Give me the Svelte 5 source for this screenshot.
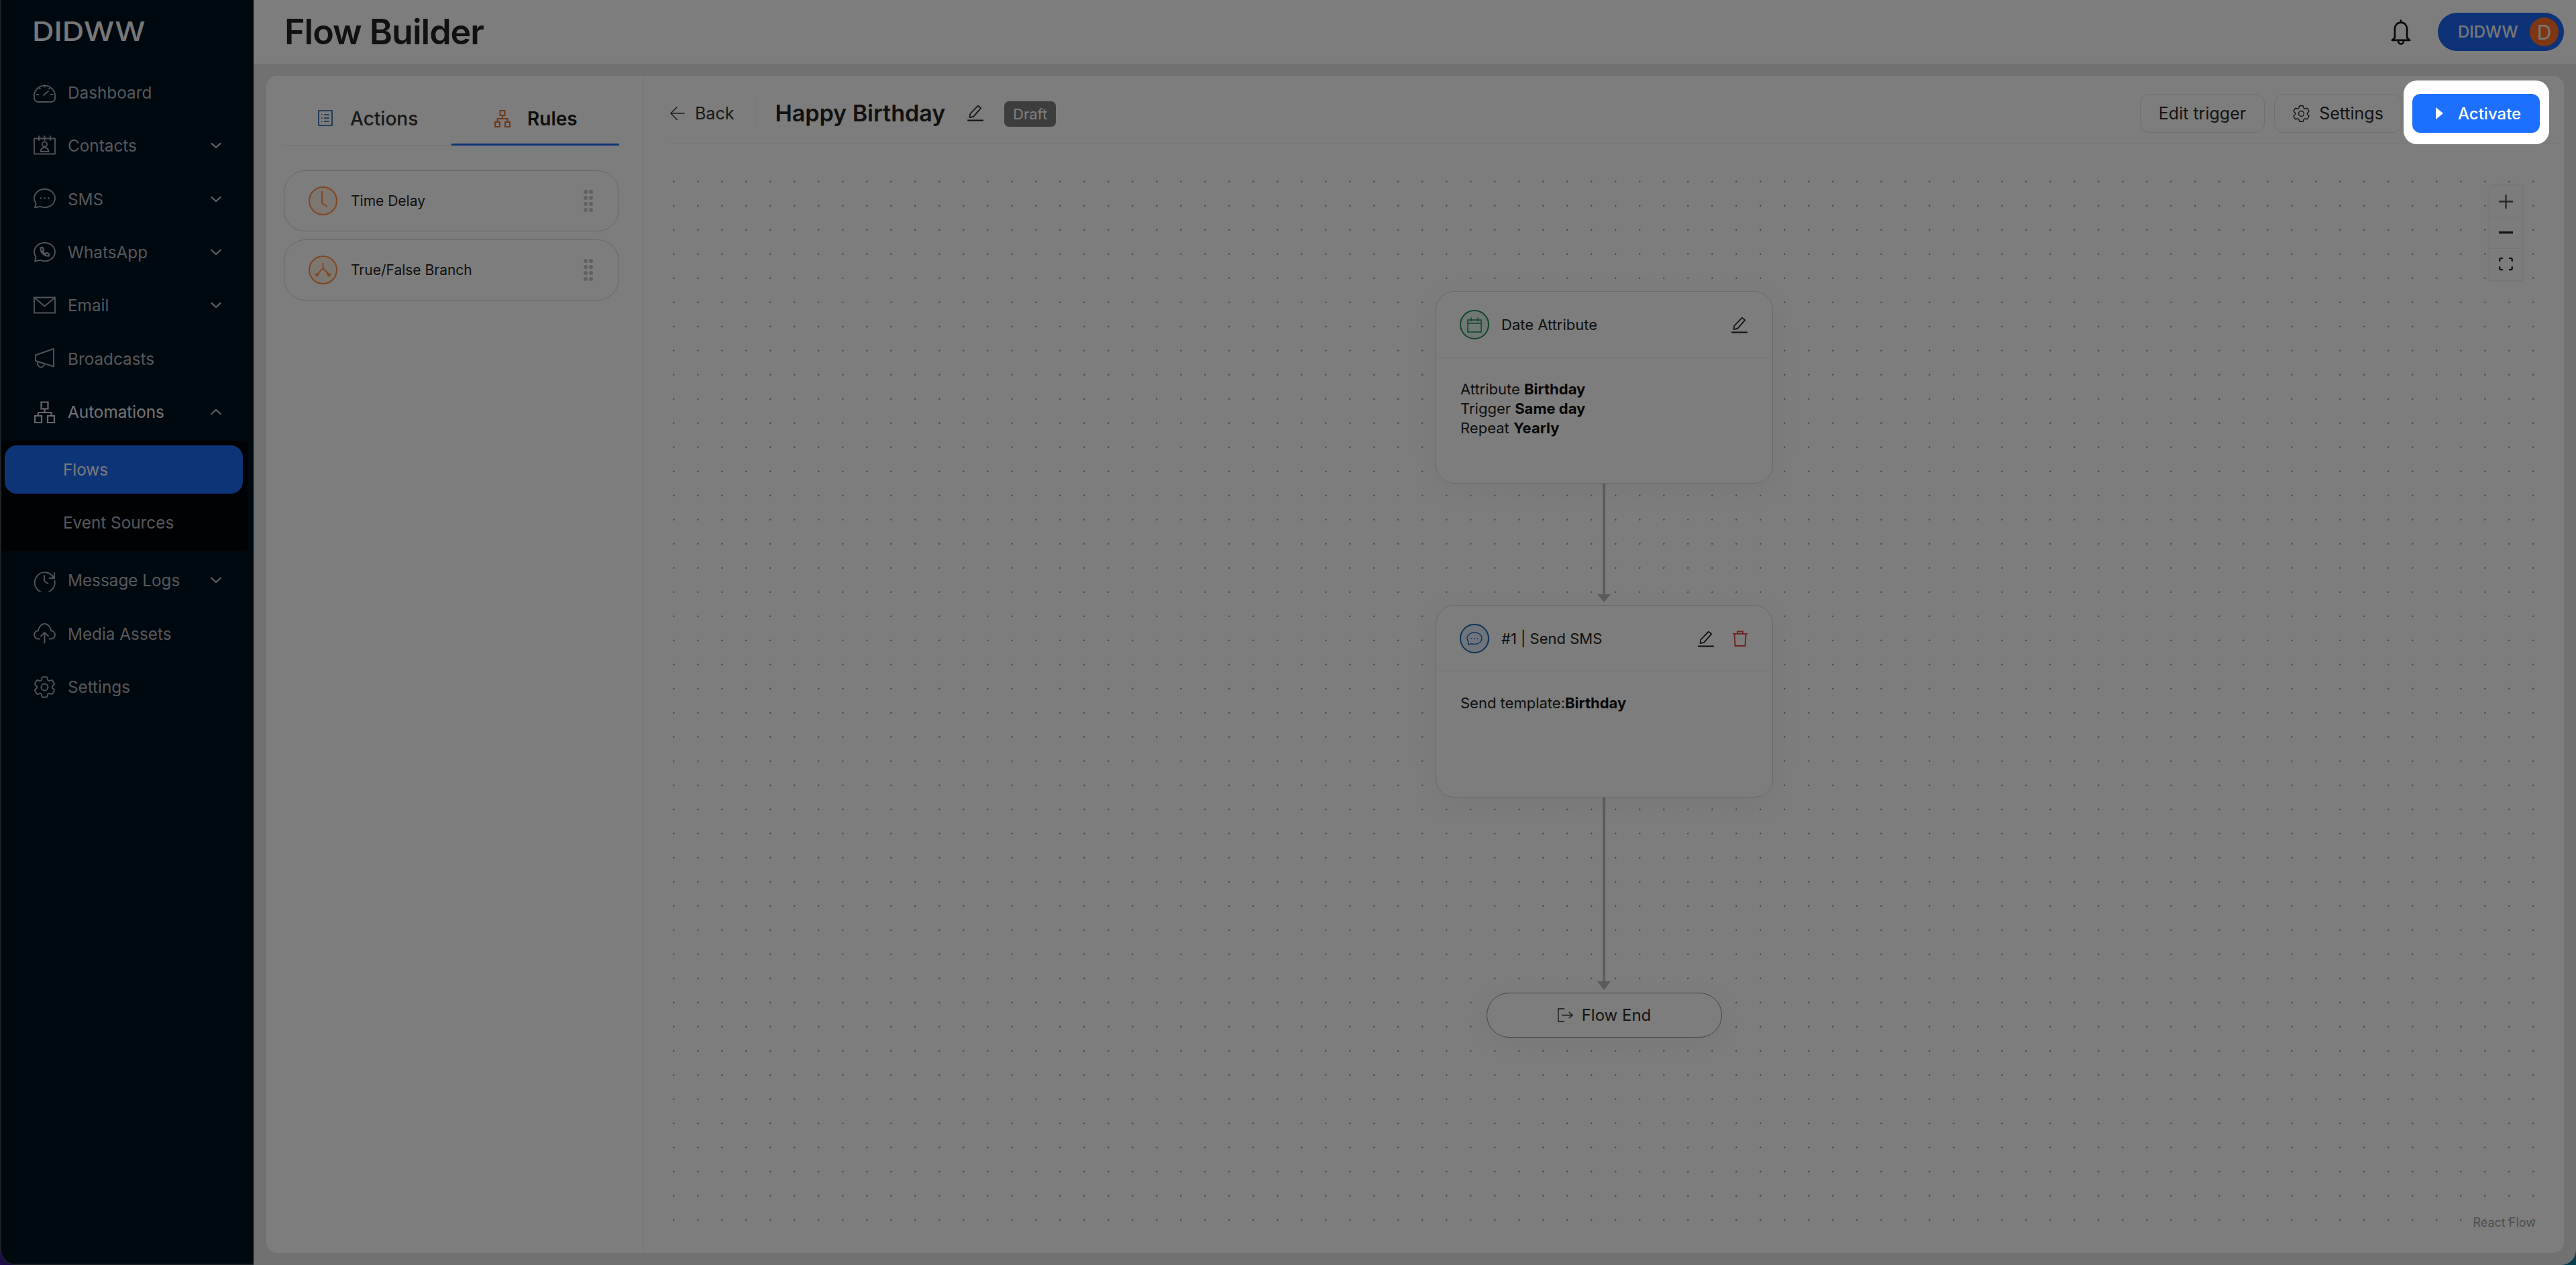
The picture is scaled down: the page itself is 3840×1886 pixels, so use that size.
<script>
  const upper = [
    { id: 'dash', label: 'Dashboard' },
    { id: 'contacts', label: 'Contacts', chev: true },
    { id: 'sms', label: 'SMS', chev: true },
    { id: 'wa', label: 'WhatsApp', chev: true },
    { id: 'mail', label: 'Email', chev: true },
    { id: 'cast', label: 'Broadcasts' }
  ];
  const lower = [
    { id: 'logs', label: 'Message Logs', chev: true },
    { id: 'media', label: 'Media Assets' },
    { id: 'gear', label: 'Settings' }
  ];
</script>

{#snippet gearPath()}
  <circle cx="12" cy="12" r="3" />
  <path d="M9.594 3.94c.09-.542.56-.94 1.110-.94h2.593c.55 0 1.020.398 1.110.94l.213 1.281c.063.374.313.686.645.870.074.040.147.083.220.127.324.196.72.257 1.075.124l1.217-.456a1.125 1.125 0 011.370.490l1.296 2.247a1.125 1.125 0 01-.26 1.431l-1.003.827c-.293.240-.438.613-.431.992a6.759 6.759 0 010 .255c-.007.378.138.75.430.990l1.005.828c.424.35.534.954.260 1.430l-1.298 2.247a1.125 1.125 0 01-1.369.491l-1.217-.456c-.355-.133-.75-.072-1.076.124a6.570 6.570 0 01-.220.128c-.331.183-.581.495-.644.869l-.213 1.280c-.09.543-.56.941-1.110.941h-2.594c-.55 0-1.020-.398-1.110-.94l-.213-1.281c-.062-.374-.312-.686-.644-.870a6.520 6.520 0 01-.220-.127c-.325-.196-.72-.257-1.076-.124l-1.217.456a1.125 1.125 0 01-1.369-.490l-1.297-2.247a1.125 1.125 0 01.260-1.431l1.004-.827c.292-.240.437-.613.430-.992a6.932 6.932 0 010-.255c.007-.378-.138-.75-.430-.990l-1.004-.828a1.125 1.125 0 01-.260-1.430l1.297-2.247a1.125 1.125 0 011.370-.491l1.216.456c.356.133.751.072 1.076-.124.072-.044.146-.087.220-.128.332-.183.582-.495.644-.869l.214-1.281z" stroke-linejoin="round" />
{/snippet}

{#snippet pencil()}
  <svg class="pencil" viewBox="0 0 24 24" fill="none" stroke="currentColor" stroke-width="1.600">
    <path d="M15.6 2.4l4 3.2L9.4 17.4l-5.2 1.2.6-5z" stroke-linejoin="round" />
    <path d="M1 22.6h22" stroke-width="1.9" />
  </svg>
{/snippet}

{#snippet grip()}
  <div class="grip">
    {#each Array(8) as _}<i></i>{/each}
  </div>
{/snippet}

{#snippet chevron(up)}
  <svg class="chev" viewBox="0 0 16 10" fill="none" stroke="currentColor" stroke-width="2.2" stroke-linecap="round" stroke-linejoin="round">
    {#if up}<path d="M1.5 8L8 2l6.5 6" />{:else}<path d="M1.5 2L8 8l6.5-6" />{/if}
  </svg>
{/snippet}

{#snippet navIcon(id)}
  <svg class="nav-icon" viewBox="0 0 33 33" fill="none" stroke="currentColor" stroke-width="1.9" stroke-linecap="round" stroke-linejoin="round">
    {#if id === 'dash'}
      <path d="M7 30h19a6 6 0 0 0 6-7 15.6 15.6 0 1 0-31 0 6 6 0 0 0 6 7z" />
      <path d="M16.5 5.5v2M8.5 9l1.4 1.4M24.5 9l-1.4 1.4M4.8 19h2.4M26 19h2.4M15 20l7-6" />
    {:else if id === 'contacts'}
      <path d="M1 5.5h31v23H1z" />
      <path d="M8 2v6M16.5 2v6M25 2v6" />
      <circle cx="16.5" cy="14" r="3.6" />
      <path d="M10.5 25c.5-4 3-6 6-6s5.500 2 6 6z" />
    {:else if id === 'sms'}
      <path d="M16.500 2C7.800 2 1 8 1 15.500c0 3 1 5.600 2.700 7.800L2 29.500l8-1.600c2 .8 4.200 1.300 6.500 1.300 8.700 0 15.500-6 15.500-13.700S25.200 2 16.500 2z" />
      <path d="M10.500 15.500h.3M16.400 15.500h.3M22.300 15.500h.3" stroke-width="2.400" />
    {:else if id === 'wa'}
      <path d="M16.500 2C7.800 2 1 8 1 15.500c0 3 1 5.600 2.700 7.800L2 29.500l8-1.600c2 .8 4.200 1.300 6.500 1.300 8.700 0 15.500-6 15.500-13.700S25.200 2 16.500 2z" />
      <path d="M10.500 9.500l3-.7 1.800 3.700-1.700 1.800c.8 2 2.300 3.400 4.300 4.300l1.800-1.700 3.700 1.800-.8 3c-6.700.4-12.500-5.400-12.100-12.200z" stroke-width="2.200" />
    {:else if id === 'mail'}
      <path d="M1 4.500h31v23H1z" stroke-linejoin="miter" />
      <path d="M1.500 5L16.500 17.500 31.500 5" />
    {:else if id === 'cast'}
      <path d="M30 2L3 11.500v8.500L30 28.500z" />
      <path d="M7 21.500a5 5 0 1 0 9 3.500" />
    {:else if id === 'auto'}
      <path d="M11.500 1.500h10v10h-10zM2 22h10v10H2zM21 22h10v10H21z" stroke-linejoin="miter" stroke-linecap="butt" stroke-width="2.200" />
      <path d="M16.500 11.500v5.500M7 22v-5h19.500v5" stroke-linecap="butt" stroke-width="2.200" />
    {:else if id === 'logs'}
      <path d="M30 12.500A15 15 0 1 0 31.500 17" />
      <path d="M31 5v8h-7.500M16 9v8.500l5.500 3.500" />
    {:else if id === 'media'}
      <path d="M9.500 24.500H7A6 6 0 0 1 1 18.500a6.500 6.500 0 0 1 6-6.300C8 6.500 11.800 2 16.500 2s8.500 4.500 9.500 10.200a6.500 6.500 0 0 1 6 6.300 6 6 0 0 1-6 6h-2.500" />
      <path d="M16.500 30.500V15M11 20.500l5.500-5.500 5.500 5.500" />
    {:else if id === 'gear'}
      <g transform="translate(-3.7 -3.7) scale(1.68)" stroke-width="1.150">{@render gearPath()}</g>
    {/if}
  </svg>
{/snippet}

{#snippet navRow(item)}
  <div class="nav-row">
    {@render navIcon(item.id)}
    <span>{item.label}</span>
    {#if item.chev}{@render chevron(false)}{/if}
  </div>
{/snippet}

<div class="app">
  <aside class="sidebar">
    <div class="logo"><span>DIDWW</span></div>
    <nav>
      {#each upper as item}{@render navRow(item)}{/each}
      <div class="nav-row open">
        {@render navIcon('auto')}
        <span>Automations</span>
        {@render chevron(true)}
      </div>
      <div class="submenu">
        <div class="sub active">Flows</div>
        <div class="sub">Event Sources</div>
      </div>
      {#each lower as item}{@render navRow(item)}{/each}
    </nav>
  </aside>

  <main class="main">
    <header class="topbar">
      <h1>Flow Builder</h1>
      <svg class="bell" viewBox="1 0 28 37.500" fill="none" stroke="currentColor" stroke-width="2.600" stroke-linejoin="round" stroke-linecap="round">
        <path d="M15 4.500c-5.500 0-9 4-9 9.500v13l-4 3.500h26l-4-3.500V14c0-5.500-3.500-9.500-9-9.500zM15 1.500v3" />
        <path d="M11 31c0 3 1.800 5 4 5s4-2 4-5" />
      </svg>
      <div class="user">
        <span>DIDWW</span>
        <b>D</b>
      </div>
    </header>

    <section class="panel">
      <div class="tools">
        <div class="tabs">
          <div class="tab">
            <svg class="tab-icon" viewBox="0 0 22 24" fill="none" stroke="#1d5a9e" stroke-width="1.600">
              <path d="M1 1h20v22H1z" />
              <path d="M9 7h8M9 12h8M9 17h8M5 7h1.500M5 12h1.500M5 17h1.500" />
            </svg>
            <span>Actions</span>
          </div>
          <div class="tab current">
            <svg class="tab-icon wide" viewBox="0 0 24 26" fill="none" stroke="#d9722c" stroke-width="2">
              <path d="M8.500 1h7v7h-7zM1 18h7v7H1zM16 18h7v7h-7z" />
              <path d="M12 8v5M4.500 18v-5h15v5" />
            </svg>
            <span>Rules</span>
          </div>
        </div>
        <div class="rule">
          <div class="rule-icon">
            <svg viewBox="0 0 39 39" fill="none" stroke="currentColor" stroke-width="2"><path d="M18 5v18l8 5" /></svg>
          </div>
          <span>Time Delay</span>
          {@render grip()}
        </div>
        <div class="rule">
          <div class="rule-icon">
            <svg viewBox="0 0 39 39" fill="none" stroke="currentColor" stroke-width="1.800">
              <path d="M19.500 9v8l-9 9M19.500 17l9 9" />
              <path d="M6 25h9l-4.500 5zM24 25h9l-4.500 5z" fill="currentColor" stroke="none" />
            </svg>
          </div>
          <span>True/False Branch</span>
          {@render grip()}
        </div>
      </div>

      <div class="builder">
        <div class="bar">
          <button class="back">
            <svg viewBox="0 0 24 24" fill="none" stroke="currentColor" stroke-width="1.600" stroke-linecap="round" stroke-linejoin="round"><path d="M23 12H1M11 2L1 12l10 10" /></svg>
            Back
          </button>
          <div class="rule-v"></div>
          <h2>Happy Birthday</h2>
          <span class="title-edit">{@render pencil()}</span>
          <span class="badge">Draft</span>
          <div class="actions">
            <button class="ghost edit">Edit trigger</button>
            <button class="ghost settings">
              <svg viewBox="2.500 2.500 19 19" fill="none" stroke="currentColor" stroke-width="1.100">{@render gearPath()}</svg>
              Settings
            </button>
            <div class="spot">
              <button class="activate">
                <svg viewBox="0 0 11 18"><path d="M0 0l11 9-11 9z" fill="#fff" /></svg>
                Activate
              </button>
            </div>
          </div>
        </div>

        <div class="canvas">
          <svg class="edges" viewBox="0 0 2794 1590">
            <path d="M1395 471v166M1395 939v275" stroke="#b8b8b8" stroke-width="4" fill="none" />
            <path d="M1385 636h20l-10 12zM1385 1213h20l-10 13z" fill="#b8b8b8" />
          </svg>

          <div class="node first">
            <div class="node-head">
              <div class="node-icon green">
                <svg viewBox="0 0 24 24" fill="none" stroke="currentColor" stroke-width="1.500"><path d="M2 5h20v18H2zM2 10h20M7 1.500V7M17 1.500V7" /></svg>
              </div>
              <span class="node-title">Date Attribute</span>
              {@render pencil()}
            </div>
            <div class="node-body">
              <div>Attribute <b>Birthday</b></div>
              <div>Trigger <b>Same day</b></div>
              <div>Repeat <b>Yearly</b></div>
            </div>
          </div>

          <div class="node second">
            <div class="node-head">
              <div class="node-icon blue">
                <svg viewBox="0 0 24 24" fill="none" stroke="currentColor" stroke-width="1.300">
                  <path d="M12 3C5.800 3 1 6.800 1 11.800c0 2.200.9 4 2.300 5.500L2.500 21l5-1.400c1.400.5 2.900.8 4.500.8 6.200 0 11-3.800 11-8.600S18.200 3 12 3z" />
                  <path d="M7.500 12h.3M11.900 12h.3M16.300 12h.3" stroke-width="1.700" stroke-linecap="round" />
                </svg>
              </div>
              <span class="node-title">#1 | Send SMS</span>
              {@render pencil()}
              <svg class="trash" viewBox="0 0 24 24" fill="none" stroke="currentColor" stroke-width="2"><path d="M1 5h22M8 5V1.500h8V5M3.500 5l1 18h15l1-18" /></svg>
            </div>
            <div class="node-body">Send template:<b>Birthday</b></div>
          </div>

          <div class="flow-end">
            <svg viewBox="0 0 24 24" fill="none" stroke="currentColor" stroke-width="1.500" stroke-linecap="round"><path d="M10 2H1v20h9M7 12h16M18 7.500l5 4.500-5 4.500" /></svg>
            Flow End
          </div>

          <div class="controls">
            <div class="ctl"><svg viewBox="0 0 22 22"><path d="M0 9.800h22v2.400H0zM9.800 0h2.400v22H9.800z" fill="#4f4f4f" /></svg></div>
            <div class="ctl"><svg viewBox="0 0 22 4"><path d="M0 0h22v3.500H0z" fill="#262626" /></svg></div>
            <div class="ctl"><svg viewBox="0 0 22 20" fill="none" stroke="#1f1f1f" stroke-width="2.400"><path d="M1.300 6V3a2 2 0 0 1 2-2h3M15.700 1h3a2 2 0 0 1 2 2v3M20.700 14v3a2 2 0 0 1-2 2h-3M6.300 19h-3a2 2 0 0 1-2-2v-3" /></svg></div>
          </div>

          <div class="attribution">React Flow</div>
        </div>
      </div>
    </section>
  </main>
</div>

<style>
  :global(body) {
    margin: 0;
    background: linear-gradient(90deg, #3a1890 0%, #3a1890 10%, #0d7a9e 90%, #0d7a9e 100%);
    overflow: hidden;
  }
  .app {
    width: 3840px;
    height: 1886px;
    display: flex;
    font-family: Inter, "Noto Sans", sans-serif;
    color: #222;
  }
  svg { display: block; flex: none; }
  button { font: inherit; color: inherit; background: none; border: 0; padding: 0; }

  .sidebar {
    width: 378px;
    flex: none;
    box-sizing: border-box;
    background: #001020;
    border-left: 2px solid #38454e;
    border-bottom: 2px solid #38454e;
    border-bottom-left-radius: 22px;
  }
  .logo {
    height: 98.500px;
    padding: 27px 0 0 46px;
    box-sizing: border-box;
    color: #f0f0f0;
    font-size: 39px;
    line-height: 40px;
    font-weight: 500;
  }
  .logo span { display: inline-block; transform: scaleX(1.155); transform-origin: left center; }
  .nav-row {
    height: 79.330px;
    display: flex;
    align-items: center;
    padding: 0 48px 0 48px;
    color: #acb0b6;
    font-size: 24.300px;
  }
  .nav-row span { margin-left: 18px; flex: 1; }
  .nav-icon { width: 33px; height: 33px; color: #cfcfcf; opacity: .8; }
  .chev { width: 16px; height: 10px; color: #c8c8c8; }
  .nav-row.open { color: #e8e8e8; }
  .nav-row.open .nav-icon { opacity: 1; }
  .submenu {
    margin: 3px 9px 4px 0;
    height: 165px;
    box-sizing: border-box;
    padding: 7px 7px 0 5px;
    background: #020408;
    display: flex;
    flex-direction: column;
    gap: 7px;
    color: #acb0b6;
    font-size: 24.300px;
  }
  .sub { height: 72px; display: flex; align-items: center; padding-left: 87px; border-radius: 18px; }
  .sub.active { background: #1c68f0; color: #f4f4f4; }

  .main {
    flex: 1;
    min-width: 0;
    display: flex;
    flex-direction: column;
    background: #e2e2e2;
    border-bottom-right-radius: 22px;
  }
  .topbar {
    height: 95px;
    flex: none;
    background: #fafafa;
    display: flex;
    align-items: center;
    padding: 0 18px 0 46px;
    box-sizing: border-box;
  }
  h1 { margin: 0; font-size: 52px; font-weight: 600; flex: 1; color: #222; letter-spacing: -1px; }
  .bell { width: 30px; height: 38px; margin-right: 40px; color: #111; }
  .user {
    width: 188px;
    height: 57px;
    box-sizing: border-box;
    border-radius: 29px;
    background: #1a64ee;
    display: flex;
    align-items: center;
    justify-content: space-between;
    padding: 0 8px 0 30px;
    font-size: 24px;
    font-weight: 500;
    color: #f2f2f2;
  }
  .user b {
    width: 43px;
    height: 43px;
    border-radius: 50%;
    background: #fe6d27;
    display: flex;
    align-items: center;
    justify-content: center;
    font-weight: 400;
    font-size: 30px;
  }

  .panel {
    flex: 1;
    margin: 18px 18px 18px 19px;
    background: #fafafa;
    border-radius: 16px;
    display: flex;
    min-height: 0;
  }
  .tools {
    width: 563px;
    flex: none;
    box-sizing: border-box;
    padding: 27px 36px 0 26px;
    border-right: 1px solid #eaeaea;
    display: flex;
    flex-direction: column;
    gap: 12px;
  }
  .tabs { display: flex; height: 77px; margin-bottom: 25px; flex: none; }
  .tab {
    width: 250px;
    box-sizing: border-box;
    display: flex;
    align-items: flex-start;
    padding: 24px 0 0 51px;
    gap: 26px;
    font-size: 28px;
    font-weight: 500;
    line-height: 26px;
    border-bottom: 1px solid #e6e6e6;
    color: #333;
  }
  .tab.current { padding-left: 64px; gap: 25px; border-bottom: 3px solid #1c68f0; font-weight: 600; color: #1a1a1a; }
  .tab-icon { width: 22px; height: 24px; }
  .tab-icon.wide { width: 24px; height: 26px; }
  .rule {
    height: 91px;
    box-sizing: border-box;
    flex: none;
    border: 1.500px solid #cfcfcf;
    border-radius: 32px;
    display: flex;
    align-items: center;
    padding: 0 38px 0 36px;
    font-size: 21px;
    color: #1f1f1f;
  }
  .rule span { flex: 1; margin-left: 20px; }
  .rule-icon {
    width: 43px;
    height: 43px;
    box-sizing: border-box;
    border: 2px solid #ff8c3e;
    border-radius: 50%;
    background: #fbeee2;
    color: #ff8c3e;
    display: flex;
    align-items: center;
    justify-content: center;
  }
  .rule-icon svg { width: 39px; height: 39px; }
  .grip {
    display: grid;
    grid-template-columns: 6px 6px;
    grid-auto-rows: 6px;
    gap: 3px 2px;
  }
  .grip i { background: #c2c2c2; border-radius: 50%; }

  .builder { flex: 1; min-width: 0; display: flex; flex-direction: column; }
  .bar {
    margin: 27px 0 0 36px;
    height: 74px;
    flex: none;
    box-sizing: border-box;
    padding-bottom: 16px;
    border-bottom: 1px solid #ececec;
    display: flex;
    align-items: flex-start;
  }
  .back {
    display: flex;
    align-items: center;
    gap: 15px;
    margin: 16px 0 0 3px;
    font-size: 25px;
    line-height: 26px;
    color: #333;
  }
  .back svg { width: 22px; height: 22px; }
  .rule-v { width: 1px; height: 53px; background: #ececec; margin: 0 29px 0 31px; }
  h2 { margin: 6px 0 0; font-size: 34px; font-weight: 600; line-height: 46px; color: #222; white-space: nowrap; }
  .title-edit { margin: 15px 30px 0 32px; display: block; color: #222; }
  .badge {
    margin-top: 11px;
    width: 77px;
    height: 38px;
    border-radius: 7px;
    background: #7a7a7a;
    color: #fff;
    font-size: 22px;
    line-height: 38px;
    text-align: center;
  }
  .pencil { width: 26px; height: 26px; }
  .actions { margin-left: auto; display: flex; align-items: flex-start; margin-right: 36px; }
  .ghost {
    height: 58px;
    box-sizing: border-box;
    border: 1.500px solid #dfdfdf;
    border-radius: 14px;
    font-size: 25px;
    color: #2a2a2a;
    display: flex;
    align-items: center;
    justify-content: center;
  }
  .edit { width: 186px; margin-right: 14px; }
  .settings { width: 191px; gap: 14px; margin-right: 15px; }
  .settings svg { width: 25px; height: 25px; }
  .spot {
    position: relative;
    z-index: 10;
    margin: -20px -14px -17px -13px;
    padding: 20px 14px 17px 13px;
    background: #fff;
    border-radius: 20px;
    box-shadow: 0 0 0 6000px rgba(0, 0, 0, .5);
  }
  .activate {
    width: 190px;
    height: 58px;
    border-radius: 12px;
    background: #1d6fff;
    color: #fff;
    font-size: 24px;
    font-weight: 500;
    display: flex;
    align-items: center;
    gap: 22px;
    padding-left: 35px;
    box-sizing: border-box;
  }
  .activate svg { width: 11px; height: 18px; }

  .canvas {
    flex: 1;
    min-height: 0;
    position: relative;
    margin: 36px 32px 28px 36px;
    background-image: radial-gradient(circle at 8.300px 20.700px, #999 1px, transparent 1.500px);
    background-size: 36px 36px;
  }
  .edges { position: absolute; left: 0; top: 0; width: 2794px; height: 1590px; }
  .node {
    position: absolute;
    left: 1144px;
    width: 503px;
    height: 287px;
    box-sizing: border-box;
    background: #fafafa;
    border: 1.500px solid #d4d4d4;
    border-radius: 28px;
    box-shadow: 0 10px 34px rgba(190, 150, 130, .10);
    font-size: 22px;
    color: #1e1e1e;
  }
  .node.first { top: 184px; }
  .node.second { top: 652px; }
  .node-head {
    height: 97px;
    border-bottom: 1.500px solid #e4e4e4;
    display: flex;
    align-items: center;
    padding: 0 36px 0 35px;
  }
  .node-title { flex: 1; margin-left: 18px; }
  .node-head .trash { margin-left: 26px; width: 24px; height: 24px; color: #df4a4a; }
  .node-icon {
    width: 44px;
    height: 44px;
    box-sizing: border-box;
    border-radius: 50%;
    display: flex;
    align-items: center;
    justify-content: center;
    border: 2px solid;
  }
  .node-icon svg { width: 24px; height: 24px; }
  .node-icon.green { color: #1e8a50; border-color: #1e8a50; background: #dff0e6; }
  .node-icon.blue { color: #1d62ae; border-color: #1d62ae; background: #dfeaf6; }
  .node-body { padding: 33px 36px; line-height: 28.800px; }
  .node-body b { font-weight: 700; color: #111; }

  .flow-end {
    position: absolute;
    left: 1220px;
    top: 1230px;
    width: 351px;
    height: 67px;
    box-sizing: border-box;
    background: #fafafa;
    border: 1.500px solid #8a8a8a;
    border-radius: 34px;
    display: flex;
    align-items: center;
    justify-content: center;
    gap: 13px;
    font-size: 24px;
    color: #2a2a2a;
    box-shadow: 0 8px 30px rgba(190, 150, 130, .10);
  }
  .flow-end svg { width: 23px; height: 23px; }

  .controls {
    position: absolute;
    right: 30px;
    top: 27px;
    width: 49px;
    box-shadow: 0 0 4px rgba(0, 0, 0, .12);
    background: #f8f8f8;
  }
  .ctl {
    height: 47px;
    box-sizing: border-box;
    display: flex;
    align-items: center;
    justify-content: center;
    border-bottom: 1px solid #e6e6e6;
  }
  .ctl svg { width: 21px; height: auto; }
  .attribution {
    position: absolute;
    right: 10px;
    bottom: 5px;
    font-size: 18px;
    line-height: 24px;
    color: #9c9c9c;
  }
</style>
